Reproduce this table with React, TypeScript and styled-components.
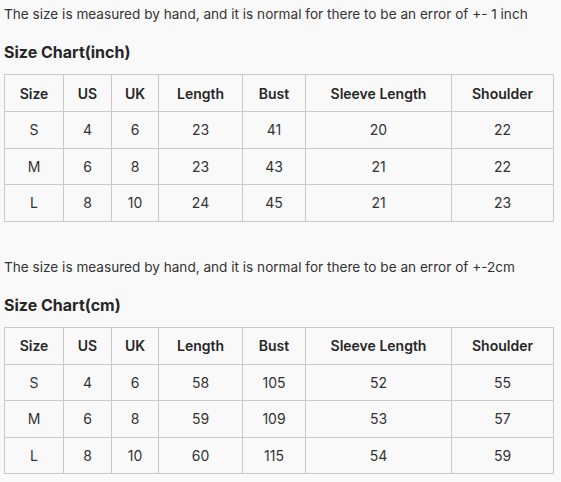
import React from "react";
import styled, { createGlobalStyle } from "styled-components";

const Global = createGlobalStyle`
  html, body { margin: 0; padding: 0; background: #f9f9f9; }
  body { font-family: Inter, "Noto Sans", sans-serif; color: #333; }
`;

const Page = styled.div`
  padding: 4px 4px 0 4px;
  display: flex;
  flex-direction: column;
`;

const Block = styled.section<{ $first?: boolean }>`
  display: flex;
  flex-direction: column;
  margin-top: ${(p) => (p.$first ? "0" : "35px")};
`;

const Note = styled.p`
  margin: 0;
  font-size: 13.6px;
  line-height: 20px;
  color: #333;
`;

const Heading = styled.h3`
  margin: 16px 0 10px 0;
  font-size: 16px;
  line-height: 24px;
  font-weight: 700;
  color: #262626;
`;

const Table = styled.table`
  border-collapse: collapse;
  width: 549px;
  table-layout: fixed;
  font-size: 14px;
`;

const Col = styled.col<{ $w: number }>`
  width: ${(p) => p.$w}px;
`;

const Th = styled.th`
  border: 1px solid #c9c9c9;
  height: 36px;
  padding: 0;
  text-align: center;
  font-weight: 600;
  color: #262626;
`;

const Td = styled.td`
  border: 1px solid #c9c9c9;
  height: 35.5px;
  padding: 0;
  text-align: center;
  font-weight: 400;
  color: #333;
`;

const headers = ["Size", "US", "UK", "Length", "Bust", "Sleeve Length", "Shoulder"];
const widths = [59, 48, 47, 84, 63, 146, 102];

const charts = [
  {
    note: "The size is measured by hand, and it is normal for there to be an error of +- 1 inch",
    title: "Size Chart(inch)",
    rows: [
      ["S", "4", "6", "23", "41", "20", "22"],
      ["M", "6", "8", "23", "43", "21", "22"],
      ["L", "8", "10", "24", "45", "21", "23"],
    ],
  },
  {
    note: "The size is measured by hand, and it is normal for there to be an error of +-2cm",
    title: "Size Chart(cm)",
    rows: [
      ["S", "4", "6", "58", "105", "52", "55"],
      ["M", "6", "8", "59", "109", "53", "57"],
      ["L", "8", "10", "60", "115", "54", "59"],
    ],
  },
];

export default function App() {
  return (
    <>
      <Global />
      <Page>
        {charts.map((c, i) => (
          <Block key={c.title} $first={i === 0}>
            <Note>{c.note}</Note>
            <Heading>{c.title}</Heading>
            <Table>
              <colgroup>
                {widths.map((w, j) => (
                  <Col key={j} $w={w} />
                ))}
              </colgroup>
              <thead>
                <tr>
                  {headers.map((h) => (
                    <Th key={h}>{h}</Th>
                  ))}
                </tr>
              </thead>
              <tbody>
                {c.rows.map((r) => (
                  <tr key={r[0]}>
                    {r.map((v, k) => (
                      <Td key={k}>{v}</Td>
                    ))}
                  </tr>
                ))}
              </tbody>
            </Table>
          </Block>
        ))}
      </Page>
    </>
  );
}
